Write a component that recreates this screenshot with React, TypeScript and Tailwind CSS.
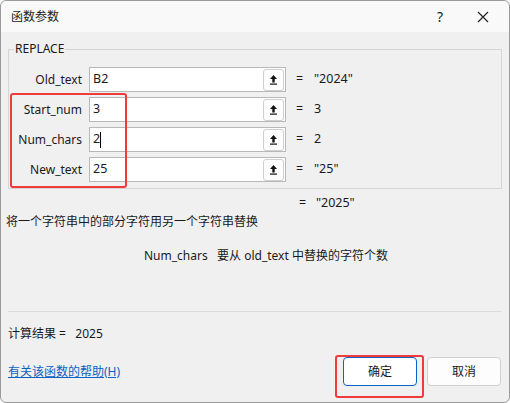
export default function App() {
  const rows = [
    { l: "Old_text", v: "B2", r: '"2024"' },
    { l: "Start_num", v: "3", r: "3" },
    { l: "Num_chars", v: "2", r: "2", cursor: true },
    { l: "New_text", v: "25", r: '"25"' },
  ];
  return (
    <div className="relative w-[510px] h-[403px] bg-white overflow-hidden text-[12.5px] text-[#1a1a1a]" style={{ fontFamily: '"Noto Sans","Noto Sans CJK SC",sans-serif' }}>
      <div className="absolute inset-0 rounded-[6px] border border-[#9a9a9a] bg-[#f0f0f0] flex flex-col">
        <div className="h-[31px] bg-[#f9f9f9] flex items-center pl-[10px] rounded-t-[6px]">
          <span className="text-[12px] flex-1">函数参数</span>
          <span className="w-[30px] text-center text-[14px] mr-[22px]">?</span>
          <svg width="12" height="12" viewBox="0 0 12 12" className="mr-[20px]"><path d="M1 1L11 11M11 1L1 11" stroke="#222" strokeWidth="1.2" /></svg>
        </div>
        <div className="relative mx-[7px] mt-[17px] h-[140px] border border-[#d5d5d5] pt-[17px]">
          <span className="absolute -top-[10px] left-[5px] bg-[#f0f0f0] px-[1px] text-[12px]">REPLACE</span>
          <div className="flex flex-col gap-[5px]">
            {rows.map((r) => (
              <div key={r.l} className="flex items-center h-[25px]">
                <span className="w-[80px] text-right pr-[7px] text-[12px]">{r.l}</span>
                <div className="w-[197px] h-[25px] bg-white border border-[#b8b8b8] flex items-center">
                  <span className="pl-[3px] flex-1 flex items-center">{r.v}{r.cursor && <span className="inline-block w-px h-[16px] bg-black" />}</span>
                  <div className="w-[21px] h-[22px] mr-[1px] border border-[#cfcfcf] rounded-[3px] bg-[#fdfdfd] flex items-center justify-center">
                    <svg width="9" height="11" viewBox="0 0 9 11"><path d="M4.5 1L1 5H3.3V8.5H5.7V5H8Z" fill="#111" /><rect x="1" y="9.5" width="7" height="1.2" fill="#111" /></svg>
                  </div>
                </div>
                <span className="ml-[10px] w-[18px]">=</span>
                <span>{r.r}</span>
              </div>
            ))}
          </div>
        </div>
        <div className="pl-[298px] mt-[5px] h-[18px]">=&nbsp;&nbsp; "2025"</div>
        <div className="pl-[5px] mt-[1px] h-[20px] text-[12px]">将一个字符串中的部分字符用另一个字符串替换</div>
        <div className="pl-[143px] mt-[14px] text-[12px]">Num_chars&nbsp;&nbsp;&nbsp;要从 old_text 中替换的字符个数</div>
        <div className="mx-[7px] mt-[46px] border-t border-[#dcdcdc]" />
        <div className="pl-[7px] mt-[13px] text-[12px]">计算结果 =&nbsp;&nbsp; 2025</div>
        <div className="flex items-center mt-[14px]">
          <span className="pl-[7px] flex-1 text-[12px] text-[#0b62c4] underline">有关该函数的帮助(H)</span>
          <button className="w-[74px] h-[29px] rounded-[4px] border border-[#0a64c8] bg-white text-[12px]">确定</button>
          <button className="ml-[10px] mr-[8px] w-[74px] h-[29px] rounded-[4px] border border-[#d0d0d0] bg-[#fdfdfd] text-[12px]">取消</button>
        </div>
      </div>
      <div className="absolute left-[10px] top-[93px] w-[117px] h-[95px] border-2 border-[#ef3b3b] rounded-[3px]" />
      <div className="absolute left-[335px] top-[355px] w-[89px] h-[43px] border-2 border-[#ef3b3b] rounded-[3px]" />
    </div>
  );
}
